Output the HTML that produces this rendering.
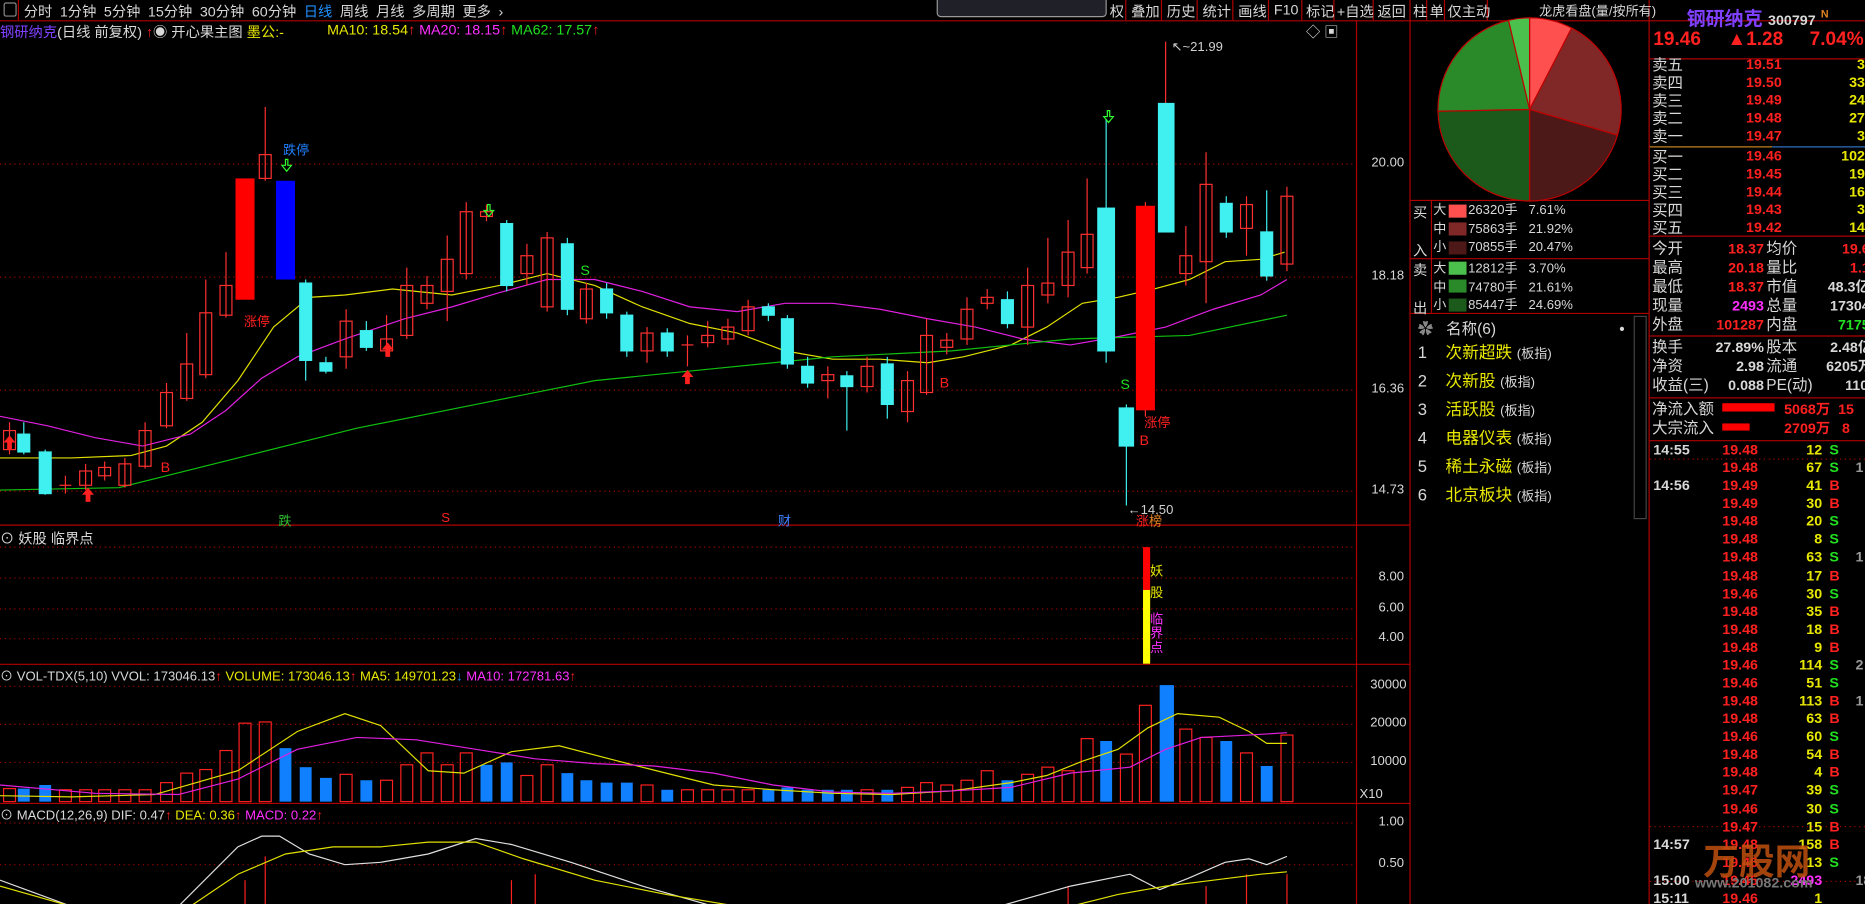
<!DOCTYPE html>
<html><head><meta charset="utf-8"><style>
html,body{margin:0;padding:0;background:#000;overflow:hidden;width:1865px;height:904px}
#w{position:absolute;left:0;top:0;width:1568px;height:760px;transform:scale(1.18941);transform-origin:0 0;background:#000;font-family:"Liberation Sans","Noto Sans CJK SC",sans-serif;font-size:12px;color:#c8c8c8;overflow:hidden}
.a{position:absolute;white-space:nowrap}
.r{color:#ff2020}.y{color:#e8e800}.g{color:#20e020}.m{color:#ff30ff}.w{color:#d8d8d8}
.q{font-size:13px;line-height:15px}
.tk{font-size:12px;font-weight:bold;line-height:15px}
</style></head><body><div id="w">
<svg class="a" style="left:0;top:0" width="1568" height="760">
<g stroke="#b00000" stroke-width="1" fill="none">
<line x1="0" y1="17.5" x2="1568" y2="17.5"/>
<line x1="1140.5" y1="17" x2="1140.5" y2="760"/>
<line x1="1185.5" y1="0" x2="1185.5" y2="760"/>
<line x1="1386.5" y1="0" x2="1386.5" y2="760"/>
<line x1="0" y1="441.5" x2="1185" y2="441.5"/>
<line x1="0" y1="558.5" x2="1185" y2="558.5"/>
<line x1="0" y1="675.5" x2="1185" y2="675.5"/>
<line x1="1186" y1="168.5" x2="1386" y2="168.5"/>
<line x1="1186" y1="217.5" x2="1386" y2="217.5"/>
<line x1="1186" y1="263.5" x2="1386" y2="263.5"/>
<line x1="1203.5" y1="168" x2="1203.5" y2="263"/>
<line x1="1387" y1="49.5" x2="1568" y2="49.5"/>
<line x1="1387" y1="198.5" x2="1568" y2="198.5"/>
<line x1="1387" y1="282.5" x2="1568" y2="282.5"/>
<line x1="1387" y1="334.5" x2="1568" y2="334.5"/>
<line x1="1387" y1="370.5" x2="1568" y2="370.5"/>
<line x1="15.5" y1="0" x2="15.5" y2="17"/>
<line x1="946.5" y1="0" x2="946.5" y2="17"/><line x1="976.5" y1="0" x2="976.5" y2="17"/><line x1="1006.5" y1="0" x2="1006.5" y2="17"/><line x1="1036.5" y1="0" x2="1036.5" y2="17"/><line x1="1066.5" y1="0" x2="1066.5" y2="17"/><line x1="1094.5" y1="0" x2="1094.5" y2="17"/><line x1="1121.5" y1="0" x2="1121.5" y2="17"/><line x1="1154.5" y1="0" x2="1154.5" y2="17"/>
<line x1="1199.5" y1="0" x2="1199.5" y2="17"/><line x1="1214.5" y1="0" x2="1214.5" y2="17"/><line x1="1250.5" y1="0" x2="1250.5" y2="17"/>
</g>
<line x1="1387" y1="123.5" x2="1490" y2="123.5" stroke="#c08020"/>
<line x1="1490" y1="123.5" x2="1568" y2="123.5" stroke="#3070c0"/>
<g stroke="#a00000" stroke-dasharray="1,3">
<line x1="0" y1="138" x2="1140" y2="138"/><line x1="0" y1="233" x2="1140" y2="233"/><line x1="0" y1="328" x2="1140" y2="328"/><line x1="0" y1="413" x2="1140" y2="413"/>
<line x1="0" y1="486" x2="1140" y2="486"/><line x1="0" y1="512" x2="1140" y2="512"/><line x1="0" y1="537" x2="1140" y2="537"/><line x1="0" y1="460" x2="1140" y2="460"/>
<line x1="0" y1="577" x2="1140" y2="577"/><line x1="0" y1="609" x2="1140" y2="609"/><line x1="0" y1="641" x2="1140" y2="641"/>
<line x1="0" y1="692" x2="1140" y2="692"/><line x1="0" y1="727" x2="1140" y2="727"/>
<line x1="1387" y1="386" x2="1568" y2="386"/><line x1="1387" y1="695" x2="1568" y2="695"/><line x1="1387" y1="741" x2="1568" y2="741"/>
</g>
<polyline fill="none" stroke="#e0e000" points="0,385 60,385 110,383 140,375 170,355 200,320 230,275 260,250 290,248 330,243 380,248 420,240 460,230 500,240 540,258 580,272 620,280 660,295 700,302 740,302 780,305 810,300 850,290 880,275 910,255 940,250 970,243 1000,235 1030,220 1060,218 1080,212"/>
<polyline fill="none" stroke="#e020e0" points="0,350 40,358 80,368 120,375 160,365 190,345 220,318 250,300 290,285 340,268 380,258 420,246 460,235 500,235 540,245 580,258 620,262 660,255 700,255 740,260 780,268 820,275 860,285 900,290 940,283 980,275 1020,260 1060,248 1082,235"/>
<polyline fill="none" stroke="#10c010" points="0,412 100,410 200,385 300,360 400,340 500,320 600,310 700,300 800,295 900,285 1000,282 1082,265"/>
<g stroke-width="1">
<g stroke="#ff3030" fill="none">
<line x1="8" y1="355" x2="8" y2="382"/><rect x="3" y="362" width="10" height="16"/>
<line x1="55" y1="400" x2="55" y2="415"/><line x1="50" y1="408" x2="60" y2="408"/>
<line x1="72" y1="390" x2="72" y2="412"/><rect x="67" y="396" width="10" height="12"/>
<line x1="88" y1="388" x2="88" y2="404"/><rect x="83" y="393" width="10" height="7"/>
<line x1="105" y1="385" x2="105" y2="410"/><rect x="100" y="390" width="10" height="18"/>
<line x1="122" y1="355" x2="122" y2="394"/><rect x="117" y="362" width="10" height="30"/>
<line x1="140" y1="322" x2="140" y2="360"/><rect x="135" y="330" width="10" height="28"/>
<line x1="157" y1="280" x2="157" y2="337"/><rect x="152" y="306" width="10" height="29"/>
<line x1="173" y1="235" x2="173" y2="318"/><rect x="168" y="263" width="10" height="52"/>
<line x1="190" y1="212" x2="190" y2="267"/><rect x="185" y="240" width="10" height="25"/>
<line x1="223" y1="90" x2="223" y2="152"/><rect x="218" y="130" width="10" height="20"/>
<line x1="291" y1="260" x2="291" y2="310"/><rect x="286" y="270" width="10" height="30"/>
<line x1="325" y1="265" x2="325" y2="297"/><rect x="320" y="285" width="10" height="10"/>
<line x1="342" y1="225" x2="342" y2="285"/><rect x="337" y="240" width="10" height="42"/>
<line x1="359" y1="232" x2="359" y2="260"/><rect x="354" y="240" width="10" height="15"/>
<line x1="376" y1="198" x2="376" y2="270"/><rect x="371" y="218" width="10" height="27"/>
<line x1="392" y1="170" x2="392" y2="235"/><rect x="387" y="178" width="10" height="52"/>
<line x1="409" y1="172" x2="409" y2="186"/><rect x="404" y="178" width="10" height="4"/>
<line x1="443" y1="205" x2="443" y2="240"/><rect x="438" y="215" width="10" height="15"/>
<line x1="460" y1="195" x2="460" y2="262"/><rect x="455" y="200" width="10" height="58"/>
<line x1="493" y1="238" x2="493" y2="272"/><rect x="488" y="243" width="10" height="25"/>
<line x1="544" y1="275" x2="544" y2="305"/><rect x="539" y="280" width="10" height="15"/>
<line x1="578" y1="282" x2="578" y2="308"/><line x1="573" y1="290" x2="583" y2="290"/>
<line x1="595" y1="270" x2="595" y2="292"/><rect x="590" y="282" width="10" height="6"/>
<line x1="612" y1="268" x2="612" y2="290"/><rect x="607" y="275" width="10" height="10"/>
<line x1="629" y1="252" x2="629" y2="282"/><rect x="624" y="258" width="10" height="20"/>
<line x1="696" y1="308" x2="696" y2="335"/><rect x="691" y="315" width="10" height="5"/>
<line x1="729" y1="300" x2="729" y2="330"/><rect x="724" y="308" width="10" height="17"/>
<line x1="763" y1="312" x2="763" y2="355"/><rect x="758" y="320" width="10" height="26"/>
<line x1="779" y1="268" x2="779" y2="332"/><rect x="774" y="282" width="10" height="48"/>
<line x1="796" y1="280" x2="796" y2="298"/><rect x="791" y="286" width="10" height="6"/>
<line x1="813" y1="250" x2="813" y2="290"/><rect x="808" y="260" width="10" height="25"/>
<line x1="830" y1="243" x2="830" y2="260"/><rect x="825" y="250" width="10" height="5"/>
<line x1="864" y1="225" x2="864" y2="290"/><rect x="859" y="240" width="10" height="35"/>
<line x1="881" y1="200" x2="881" y2="255"/><rect x="876" y="238" width="10" height="10"/>
<line x1="898" y1="185" x2="898" y2="250"/><rect x="893" y="212" width="10" height="28"/>
<line x1="914" y1="150" x2="914" y2="230"/><rect x="909" y="197" width="10" height="28"/>
<line x1="980" y1="35" x2="980" y2="90"/>
<line x1="997" y1="190" x2="997" y2="240"/><rect x="992" y="215" width="10" height="15"/>
<line x1="1014" y1="128" x2="1014" y2="255"/><rect x="1009" y="155" width="10" height="65"/>
<line x1="1048" y1="165" x2="1048" y2="215"/><rect x="1043" y="172" width="10" height="20"/>
<line x1="1082" y1="157" x2="1082" y2="228"/><rect x="1077" y="165" width="10" height="57"/>
<line x1="963" y1="170" x2="963" y2="350"/>
</g>
<rect x="198" y="150" width="16" height="102" fill="#ff0000"/>
<rect x="955" y="173" width="16" height="172" fill="#ff0000"/>
<rect x="232" y="152" width="16" height="83" fill="#0000ff"/>
<g stroke="#40f0f0" fill="#40f0f0">
<line x1="20" y1="355" x2="20" y2="382"/><rect x="15" y="365" width="10" height="15"/>
<line x1="38" y1="378" x2="38" y2="416"/><rect x="33" y="380" width="10" height="35"/>
<line x1="257" y1="235" x2="257" y2="320"/><rect x="252" y="238" width="10" height="65"/>
<line x1="274" y1="300" x2="274" y2="314"/><rect x="269" y="305" width="10" height="7"/>
<line x1="308" y1="270" x2="308" y2="295"/><rect x="303" y="278" width="10" height="14"/>
<line x1="426" y1="185" x2="426" y2="245"/><rect x="421" y="188" width="10" height="52"/>
<line x1="477" y1="200" x2="477" y2="265"/><rect x="472" y="205" width="10" height="55"/>
<line x1="510" y1="238" x2="510" y2="268"/><rect x="505" y="243" width="10" height="20"/>
<line x1="527" y1="262" x2="527" y2="300"/><rect x="522" y="265" width="10" height="30"/>
<line x1="561" y1="276" x2="561" y2="300"/><rect x="556" y="280" width="10" height="15"/>
<line x1="646" y1="255" x2="646" y2="270"/><rect x="641" y="258" width="10" height="7"/>
<line x1="662" y1="265" x2="662" y2="310"/><rect x="657" y="268" width="10" height="38"/>
<line x1="679" y1="300" x2="679" y2="326"/><rect x="674" y="308" width="10" height="14"/>
<line x1="712" y1="312" x2="712" y2="362"/><rect x="707" y="316" width="10" height="9"/>
<line x1="746" y1="300" x2="746" y2="352"/><rect x="741" y="306" width="10" height="34"/>
<line x1="847" y1="245" x2="847" y2="276"/><rect x="842" y="252" width="10" height="20"/>
<line x1="930" y1="100" x2="930" y2="305"/><rect x="923" y="175" width="14" height="120"/>
<line x1="947" y1="340" x2="947" y2="425"/><rect x="941" y="343" width="12" height="32"/>
<rect x="974" y="87" width="13" height="108"/>
<line x1="1031" y1="165" x2="1031" y2="200"/><rect x="1026" y="171" width="10" height="24"/>
<line x1="1065" y1="160" x2="1065" y2="236"/><rect x="1060" y="195" width="10" height="37"/>
</g>
</g>
<g stroke="#ff2020" fill="none">
<rect x="3" y="663" width="10" height="11"/><rect x="50" y="664" width="10" height="10"/><rect x="67" y="664" width="10" height="10"/><rect x="83" y="664" width="10" height="10"/><rect x="100" y="664" width="10" height="10"/><rect x="117" y="664" width="10" height="10"/><rect x="135" y="658" width="10" height="16"/><rect x="152" y="650" width="10" height="24"/><rect x="168" y="647" width="10" height="27"/><rect x="185" y="631" width="10" height="43"/><rect x="201" y="608" width="10" height="66"/><rect x="218" y="607" width="10" height="67"/><rect x="286" y="651" width="10" height="23"/><rect x="320" y="656" width="10" height="18"/><rect x="337" y="643" width="10" height="31"/><rect x="354" y="633" width="10" height="41"/><rect x="371" y="643" width="10" height="31"/><rect x="387" y="633" width="10" height="41"/><rect x="438" y="652" width="10" height="22"/><rect x="455" y="643" width="10" height="31"/><rect x="539" y="660" width="10" height="14"/><rect x="573" y="664" width="10" height="10"/><rect x="590" y="664" width="10" height="10"/><rect x="607" y="664" width="10" height="10"/><rect x="624" y="664" width="10" height="10"/><rect x="724" y="664" width="10" height="10"/><rect x="758" y="662" width="10" height="12"/><rect x="774" y="658" width="10" height="16"/><rect x="791" y="660" width="10" height="14"/><rect x="808" y="656" width="10" height="18"/><rect x="825" y="648" width="10" height="26"/><rect x="859" y="651" width="10" height="23"/><rect x="876" y="645" width="10" height="29"/><rect x="893" y="648" width="10" height="26"/><rect x="909" y="621" width="10" height="53"/><rect x="942" y="634" width="10" height="40"/><rect x="958" y="593" width="10" height="81"/><rect x="992" y="613" width="10" height="61"/><rect x="1009" y="620" width="10" height="54"/><rect x="1043" y="633" width="10" height="41"/><rect x="1077" y="618" width="10" height="56"/>
</g>
<g fill="#1080ff">
<rect x="15" y="663" width="10" height="11"/><rect x="33" y="660" width="10" height="14"/><rect x="235" y="629" width="10" height="45"/><rect x="252" y="645" width="10" height="29"/><rect x="269" y="654" width="10" height="20"/><rect x="303" y="656" width="10" height="18"/><rect x="404" y="643" width="10" height="31"/><rect x="421" y="641" width="10" height="33"/><rect x="472" y="650" width="10" height="24"/><rect x="488" y="656" width="10" height="18"/><rect x="505" y="658" width="10" height="16"/><rect x="522" y="658" width="10" height="16"/><rect x="556" y="664" width="10" height="10"/><rect x="641" y="664" width="10" height="10"/><rect x="657" y="662" width="10" height="12"/><rect x="674" y="664" width="10" height="10"/><rect x="691" y="664" width="10" height="10"/><rect x="707" y="664" width="10" height="10"/><rect x="741" y="664" width="10" height="10"/><rect x="842" y="656" width="10" height="18"/><rect x="925" y="623" width="10" height="51"/><rect x="975" y="576" width="12" height="98"/><rect x="1026" y="623" width="10" height="51"/><rect x="1060" y="644" width="10" height="30"/>
</g>
<polyline fill="none" stroke="#e0e000" points="0,669 60,670 130,668 200,648 250,615 290,600 320,610 360,648 390,650 430,632 470,627 520,640 560,650 600,660 650,664 700,667 750,668 800,665 850,658 880,652 910,640 940,630 965,612 990,600 1025,603 1050,615 1065,625 1082,625"/>
<polyline fill="none" stroke="#e020e0" points="0,660 80,667 150,668 200,655 250,630 300,620 350,622 400,630 450,638 500,642 550,644 600,650 650,660 700,666 750,667 800,665 850,662 900,650 950,645 980,630 1010,620 1050,618 1082,616"/>
<g stroke="#ff2020"><line x1="206" y1="740" x2="206" y2="760"/><line x1="223" y1="720" x2="223" y2="760"/><line x1="430" y1="740" x2="430" y2="760"/><line x1="450" y1="735" x2="450" y2="760"/><line x1="898" y1="745" x2="898" y2="760"/><line x1="1048" y1="735" x2="1048" y2="760"/><line x1="1082" y1="735" x2="1082" y2="760"/><line x1="1014" y1="745" x2="1014" y2="760"/></g>
<polyline fill="none" stroke="#e0e0e0" points="0,740 60,762 150,762 200,712 220,703 235,703 260,718 290,727 320,725 360,718 400,705 430,710 480,725 540,745 600,762 840,762 900,745 950,735 975,748 1000,738 1030,725 1050,722 1065,727 1082,720"/>
<polyline fill="none" stroke="#e0e000" points="0,745 60,762 160,762 200,735 240,718 280,712 320,712 360,708 400,708 440,722 500,740 560,752 620,762 900,762 940,752 980,745 1020,740 1060,735 1082,733"/>
<rect x="961" y="460" width="6" height="36" fill="#ff0000"/><rect x="961" y="496" width="6" height="62" fill="#ffff00"/>
<g stroke="#c00000" stroke-width="1">
<path d="M1286,92 L1286,15 A77,77 0 0 1 1321.4,23.6 Z" fill="#ff5050"/>
<path d="M1286,92 L1321.4,23.6 A77,77 0 0 1 1359.9,113.6 Z" fill="#802828"/>
<path d="M1286,92 L1359.9,113.6 A77,77 0 0 1 1286,169 Z" fill="#4c1818"/>
<path d="M1286,92 L1286,169 A77,77 0 0 1 1209,93.5 Z" fill="#1c5a1c"/>
<path d="M1286,92 L1209,93.5 A77,77 0 0 1 1268.3,17.1 Z" fill="#2a8a2a"/>
<path d="M1286,92 L1268.3,17.1 A77,77 0 0 1 1286,15 Z" fill="#4cc04c"/>
</g>
<g><rect x="1218" y="172" width="15" height="11" fill="#ff5050"/><rect x="1218" y="187" width="15" height="11" fill="#802828"/><rect x="1218" y="203" width="15" height="11" fill="#4c1818"/><rect x="1218" y="220" width="15" height="11" fill="#4cc04c"/><rect x="1218" y="235" width="15" height="11" fill="#2a8a2a"/><rect x="1218" y="251" width="15" height="11" fill="#1c5a1c"/></g>
<rect x="1448" y="339" width="44" height="7" fill="#ff0000"/><rect x="1448" y="356" width="23" height="6" fill="#ff0000"/>
<rect x="1374" y="266" width="10" height="170" fill="none" stroke="#444"/>
<rect x="788" y="-6" width="142" height="20" rx="3" fill="#202028" stroke="#999"/>
<g fill="#ff2020"><path d="M3,372 l5,-6 5,6 h-3 v6 h-4 v-6z"/><path d="M69,416 l5,-6 5,6 h-3 v6 h-4 v-6z"/><path d="M321,294 l5,-6 5,6 h-3 v6 h-4 v-6z"/><path d="M573,317 l5,-6 5,6 h-3 v6 h-4 v-6z"/></g>
<g fill="none" stroke="#30ff30"><path d="M240,134 v5 h-3 l4,5 4,-5 h-3 v-5z"/><path d="M410,172 v5 h-3 l4,5 4,-5 h-3 v-5z"/><path d="M931,93 v5 h-3 l4,5 4,-5 h-3 v-5z"/></g>
<text x="985" y="43" fill="#d0d0d0" font-size="11" font-family="Liberation Sans">↖~21.99</text>
<text x="948" y="432" fill="#d0d0d0" font-size="11" font-family="Liberation Sans">←14.50</text>
</svg>
<div class="a" style="left:3px;top:2px;width:9px;height:10px;border:1px solid #888;border-radius:2px"></div>
<div class="a w" style="left:20px;top:1px;word-spacing:3px">分时 1分钟 5分钟 15分钟 30分钟 60分钟 <span style="color:#2090ff">日线</span> 周线 月线 多周期 更多 ›</div>
<div class="a w" style="left:933px;top:1px">权</div>
<div class="a w" style="left:951px;top:1px">叠加</div>
<div class="a w" style="left:981px;top:1px">历史</div>
<div class="a w" style="left:1011px;top:1px">统计</div>
<div class="a w" style="left:1041px;top:1px">画线</div>
<div class="a w" style="left:1071px;top:1px">F10</div>
<div class="a w" style="left:1098px;top:1px">标记</div>
<div class="a w" style="left:1124px;top:1px">+自选</div>
<div class="a w" style="left:1158px;top:1px">返回</div>
<div class="a w" style="left:1188px;top:1px">柱</div>
<div class="a w" style="left:1202px;top:1px">单</div>
<div class="a w" style="left:1217px;top:1px">仅主动</div>
<div class="a w" style="left:1294px;top:1px;font-size:11px">龙虎看盘(量/按所有)</div>
<div class="a" style="left:0;top:18px"><span style="color:#8040ff">钢研纳克</span><span class="w">(日线 前复权)</span> <span class="r">↑</span><span class="w">◉ 开心果主图</span> <span class="y">墨公:-</span></div>
<div class="a" style="left:275px;top:18px"><span class="y">MA10: 18.54</span><span class="r">↑</span> <span class="m">MA20: 18.15</span><span class="r">↑</span> <span class="g">MA62: 17.57</span><span class="r">↑</span></div>
<div class="a w" style="left:1098px;top:18px">◇ ▣</div>
<div class="a w" style="left:1153px;top:131px;font-size:11px">20.00</div>
<div class="a w" style="left:1153px;top:226px;font-size:11px">18.18</div>
<div class="a w" style="left:1153px;top:321px;font-size:11px">16.36</div>
<div class="a w" style="left:1153px;top:406px;font-size:11px">14.73</div>
<div class="a w" style="left:1159px;top:479px;font-size:11px">8.00</div>
<div class="a w" style="left:1159px;top:505px;font-size:11px">6.00</div>
<div class="a w" style="left:1159px;top:530px;font-size:11px">4.00</div>
<div class="a w" style="left:1152px;top:570px;font-size:11px">30000</div>
<div class="a w" style="left:1152px;top:602px;font-size:11px">20000</div>
<div class="a w" style="left:1152px;top:634px;font-size:11px">10000</div>
<div class="a w" style="left:1143px;top:662px;font-size:11px">X10</div>
<div class="a w" style="left:1159px;top:685px;font-size:11px">1.00</div>
<div class="a w" style="left:1159px;top:720px;font-size:11px">0.50</div>
<div class="a r" style="left:205px;top:262px;font-size:11px">涨停</div>
<div class="a" style="left:238px;top:118px;font-size:11px;color:#2080ff">跌停</div>
<div class="a r" style="left:962px;top:347px;font-size:11px">涨停</div>
<div class="a r" style="left:135px;top:386px;font-size:12px">B</div>
<div class="a r" style="left:790px;top:315px;font-size:12px">B</div>
<div class="a r" style="left:958px;top:363px;font-size:12px">B</div>
<div class="a g" style="left:488px;top:220px;font-size:12px">S</div>
<div class="a g" style="left:942px;top:316px;font-size:12px">S</div>
<div class="a" style="left:234px;top:430px;font-size:11px;color:#30c030">跌</div>
<div class="a r" style="left:371px;top:430px;font-size:11px">S</div>
<div class="a" style="left:654px;top:430px;font-size:11px;color:#4080ff">财</div>
<div class="a" style="left:955px;top:430px;font-size:11px"><span class="r">涨</span><span style="color:#e08020">榜</span></div>
<div class="a w" style="left:0;top:444px">⊙ 妖股 临界点</div>
<div class="a y" style="left:967px;top:472px;font-size:11px">妖</div>
<div class="a y" style="left:967px;top:490px;font-size:11px">股</div>
<div class="a m" style="left:967px;top:515px;font-size:11px;line-height:12px;width:12px;white-space:normal">临界点</div>
<div class="a" style="left:0;top:560px;font-size:11px"><span class="w">⊙ VOL-TDX(5,10) VVOL: 173046.13</span><span class="r">↑</span> <span class="y">VOLUME: 173046.13</span><span class="r">↑</span> <span class="y">MA5: 149701.23</span><span style="color:#2090ff">↓</span> <span class="m">MA10: 172781.63</span><span class="r">↑</span></div>
<div class="a" style="left:0;top:677px;font-size:11px"><span class="w">⊙ MACD(12,26,9) DIF: 0.47</span><span class="r">↑</span> <span class="y">DEA: 0.36</span><span class="r">↑</span> <span class="m">MACD: 0.22</span><span class="r">↑</span></div>
<div class="a w" style="left:1188px;top:171px;line-height:16px">买<br><br>入</div>
<div class="a w" style="left:1188px;top:219px;line-height:16px">卖<br><br>出</div>
<div class="a w" style="left:1205px;top:170px;line-height:15.5px;font-size:11px">大 &nbsp;&nbsp;&nbsp;&nbsp;&nbsp;26320手 &nbsp;&nbsp;7.61%<br>中 &nbsp;&nbsp;&nbsp;&nbsp;&nbsp;75863手 &nbsp;&nbsp;21.92%<br>小 &nbsp;&nbsp;&nbsp;&nbsp;&nbsp;70855手 &nbsp;&nbsp;20.47%</div>
<div class="a w" style="left:1205px;top:219px;line-height:15.5px;font-size:11px">大 &nbsp;&nbsp;&nbsp;&nbsp;&nbsp;12812手 &nbsp;&nbsp;3.70%<br>中 &nbsp;&nbsp;&nbsp;&nbsp;&nbsp;74780手 &nbsp;&nbsp;21.61%<br>小 &nbsp;&nbsp;&nbsp;&nbsp;&nbsp;85447手 &nbsp;&nbsp;24.69%</div>
<div class="a w" style="left:1192px;top:266px;font-size:13px"><span style="color:#888">✿</span> &nbsp;&nbsp;名称(6) <span style="margin-left:100px">•</span></div>
<div class="a" style="left:1192px;top:285px;font-size:14px;line-height:22px">
<div><span class="w">1</span> &nbsp;&nbsp;&nbsp;<span class="y">次新超跌</span> <span class="w" style="font-size:11px">(板指)</span></div>
<div><span class="w">2</span> &nbsp;&nbsp;&nbsp;<span class="y">次新股</span> <span class="w" style="font-size:11px">(板指)</span></div>
<div><span class="w">3</span> &nbsp;&nbsp;&nbsp;<span class="y">活跃股</span> <span class="w" style="font-size:11px">(板指)</span></div>
<div><span class="w">4</span> &nbsp;&nbsp;&nbsp;<span class="y">电器仪表</span> <span class="w" style="font-size:11px">(板指)</span></div>
<div><span class="w">5</span> &nbsp;&nbsp;&nbsp;<span class="y">稀土永磁</span> <span class="w" style="font-size:11px">(板指)</span></div>
<div><span class="w">6</span> &nbsp;&nbsp;&nbsp;<span class="y">北京板块</span> <span class="w" style="font-size:11px">(板指)</span></div>
</div>
<div class="a" style="left:1418px;top:2px;font-size:16px;font-weight:bold;color:#8040ff">钢研纳克 <span class="w" style="font-size:12px">300797</span> <sup style="color:#e08020;font-size:9px">N</sup></div>
<div class="a r" style="left:1390px;top:25px;font-size:16px;font-weight:bold">19.46 &nbsp;&nbsp;&nbsp;&nbsp;▲1.28 &nbsp;&nbsp;&nbsp;&nbsp;7.04%</div>
<div class="a w q" style="left:1389px;top:47px;line-height:15.1px">卖五<br>卖四<br>卖三<br>卖二<br>卖一</div>
<div class="a r tk" style="left:1468px;top:47px;line-height:15.1px">19.51<br>19.50<br>19.49<br>19.48<br>19.47</div>
<div class="a y tk" style="left:1508px;top:47px;width:60px;text-align:right;line-height:15.1px">3<br>33<br>24<br>27<br>3</div>
<div class="a w q" style="left:1389px;top:124px;line-height:15.1px">买一<br>买二<br>买三<br>买四<br>买五</div>
<div class="a r tk" style="left:1468px;top:124px;line-height:15.1px">19.46<br>19.45<br>19.44<br>19.43<br>19.42</div>
<div class="a y tk" style="left:1508px;top:124px;width:60px;text-align:right;line-height:15.1px">102<br>19<br>16<br>3<br>14</div>
<div class="a w q" style="left:1389px;top:201px;line-height:16px">今开<br>最高<br>最低<br>现量<br>外盘</div>
<div class="a tk" style="left:1420px;top:201px;width:63px;text-align:right;line-height:16px"><span class="r">18.37</span><br><span class="r">20.18</span><br><span class="r">18.37</span><br><span class="m">2493</span><br><span class="r">101287</span></div>
<div class="a w q" style="left:1485px;top:201px;line-height:16px">均价<br>量比<br>市值<br>总量<br>内盘</div>
<div class="a tk" style="left:1508px;top:201px;width:64px;text-align:right;line-height:16px"><span class="r">19.6</span><br><span class="r">1.1</span><br><span class="w">48.3亿</span><br><span class="w">17304</span><br><span class="g">7175</span></div>
<div class="a w q" style="left:1389px;top:284px;line-height:16px">换手<br>净资<br>收益(三)</div>
<div class="a w tk" style="left:1420px;top:284px;width:63px;text-align:right;line-height:16px">27.89%<br>2.98<br>0.088</div>
<div class="a w q" style="left:1485px;top:284px;line-height:16px">股本<br>流通<br>PE(动)</div>
<div class="a w tk" style="left:1508px;top:284px;width:66px;text-align:right;line-height:16px">2.48亿<br>6205万<br>110.</div>
<div class="a w q" style="left:1389px;top:336px;line-height:16px">净流入额<br>大宗流入</div>
<div class="a r tk" style="left:1500px;top:336px;line-height:16px">5068万 &nbsp;15<br>2709万 &nbsp;&nbsp;8</div>
<div class="a w tk" style="left:1390px;top:371px;line-height:15.08px">14:55<br><br>14:56<br><br><br><br><br><br><br><br><br><br><br><br><br><br><br><br><br><br><br><br>14:57<br><br>15:00<br>15:11</div>
<div class="a r tk" style="left:1448px;top:371px;line-height:15.08px">19.48<br>19.48<br>19.49<br>19.49<br>19.48<br>19.48<br>19.48<br>19.48<br>19.46<br>19.48<br>19.48<br>19.48<br>19.46<br>19.46<br>19.48<br>19.48<br>19.46<br>19.48<br>19.48<br>19.47<br>19.46<br>19.47<br>19.48<br>19.46<br>19.45<br>19.46</div>
<div class="a y tk" style="left:1500px;top:371px;width:32px;text-align:right;line-height:15.08px">12<br>67<br>41<br>30<br>20<br>8<br>63<br>17<br>30<br>35<br>18<br>9<br>114<br>51<br>113<br>63<br>60<br>54<br>4<br>39<br>30<br>15<br>158<br>13<br><span class="m">2493</span><br>1</div>
<div class="a tk" style="left:1538px;top:371px;line-height:15.08px"><span class="g">S</span><br><span class="g">S</span><br><span class="r">B</span><br><span class="r">B</span><br><span class="g">S</span><br><span class="g">S</span><br><span class="g">S</span><br><span class="r">B</span><br><span class="g">S</span><br><span class="r">B</span><br><span class="r">B</span><br><span class="r">B</span><br><span class="g">S</span><br><span class="g">S</span><br><span class="r">B</span><br><span class="r">B</span><br><span class="g">S</span><br><span class="r">B</span><br><span class="r">B</span><br><span class="g">S</span><br><span class="g">S</span><br><span class="r">B</span><br><span class="r">B</span><br><span class="g">S</span></div>
<div class="a tk" style="left:1560px;top:371px;line-height:15.08px;color:#999">&nbsp;<br>1<br><br><br><br><br>1<br><br><br><br><br><br>2<br><br>1<br><br><br><br><br><br><br><br><br><br>18</div>
<div class="a" style="left:1432px;top:700px;font-size:30px;font-weight:bold;color:#c05010;opacity:.85">万股网</div>
<div class="a" style="left:1425px;top:735px;font-size:12px;font-weight:bold;color:#777">www.201082.com</div>
</div></body></html>
